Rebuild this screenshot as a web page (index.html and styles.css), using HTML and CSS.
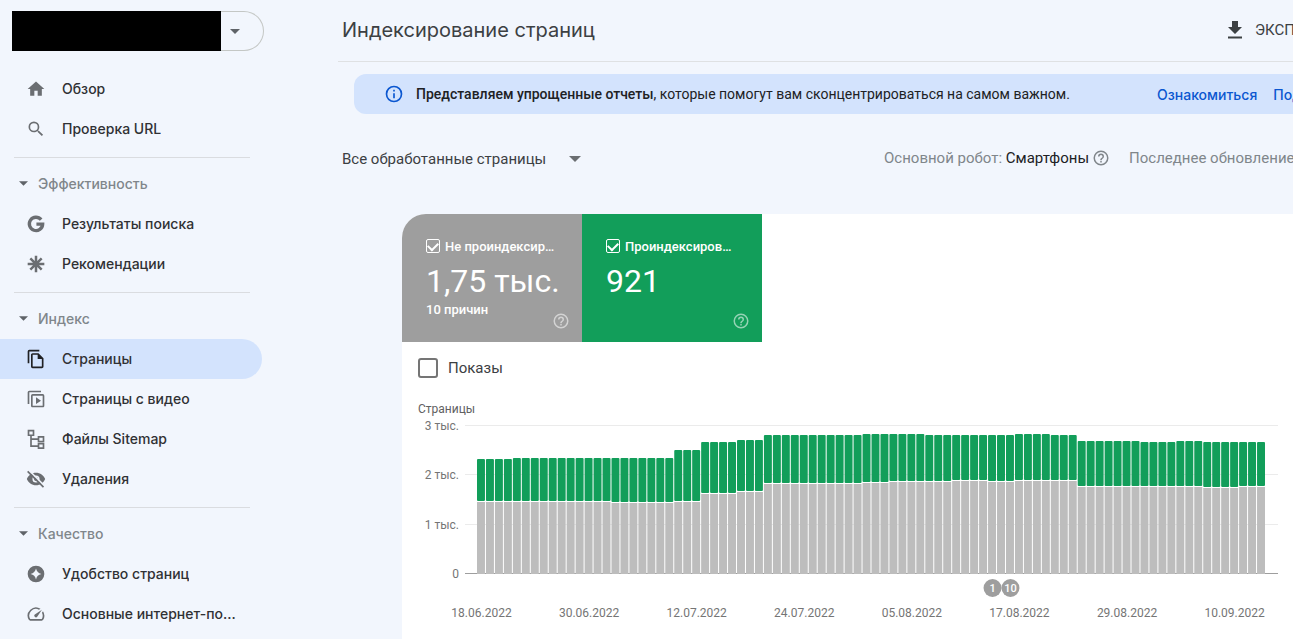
FILE: index.html
```html
<!DOCTYPE html>
<html lang="ru">
<head>
<meta charset="utf-8">
<title>Индексирование страниц</title>
<link rel="stylesheet" href="styles.css">
</head>
<body>
<aside class="sidebar">
  <div class="property">
    <span class="property-name"></span>
    <button class="property-toggle" type="button" aria-label="Выбрать ресурс"><svg class="caret" viewBox="0 0 10 5"><path d="M0 0h10L5 5z"/></svg></button>
  </div>
  <nav class="nav">
    <a class="nav-item" href="#"><svg class="icon" viewBox="0 0 24 24"><path d="M10 20v-6h4v6h5v-8h3L12 3 2 12h3v8z"/></svg><span>Обзор</span></a>
    <a class="nav-item" href="#"><svg class="icon" viewBox="0 0 24 24"><path d="M15.5 14h-.79l-.28-.27A6.47 6.47 0 0 0 16 9.5 6.5 6.5 0 1 0 9.5 16c1.61 0 3.09-.59 4.23-1.57l.27.28v.79l5 4.99L20.49 19zm-6 0a4.5 4.5 0 1 1 0-9 4.5 4.5 0 0 1 0 9z"/></svg><span>Проверка URL</span></a>
    <hr class="rule">
    <button class="nav-group" type="button"><svg class="caret caret-small" viewBox="0 0 10 5"><path d="M0 0h10L5 5z"/></svg>Эффективность</button>
    <a class="nav-item" href="#"><svg class="icon" viewBox="0 0 24 24"><path class="stroke-g" d="M18.2 6.8A8 8 0 1 0 20 12.100h-7.500"/></svg><span>Результаты поиска</span></a>
    <a class="nav-item" href="#"><svg class="icon" viewBox="0 0 24 24"><path class="stroke-star" d="M12 2v20M2 12h20M5.200 5.200l13.600 13.600M18.800 5.200 5.200 18.800"/></svg><span>Рекомендации</span></a>
    <hr class="rule">
    <button class="nav-group" type="button"><svg class="caret caret-small" viewBox="0 0 10 5"><path d="M0 0h10L5 5z"/></svg>Индекс</button>
    <a class="nav-item active" href="#" aria-current="page"><svg class="icon" viewBox="0 0 24 24"><path d="M16 1H4a2 2 0 0 0-2 2v14h2V3h12zm-1 4 6 6v10c0 1.100-.9 2-2 2H8c-1.100 0-2-.9-2-2V7c0-1.100.9-2 2-2zM8 7v14h11v-9h-5V7z"/></svg><span>Страницы</span></a>
    <a class="nav-item" href="#"><svg class="icon" viewBox="0 0 24 24"><path d="M18 2H4a2 2 0 0 0-2 2v14h2V4h14zM20 6H8a2 2 0 0 0-2 2v12c0 1.100.9 2 2 2h12c1.100 0 2-.9 2-2V8a2 2 0 0 0-2-2zm0 14H8V8h12zM12 10v8l6-4z"/></svg><span>Страницы с видео</span></a>
    <a class="nav-item" href="#"><svg class="icon" viewBox="0 0 24 24"><path class="stroke" d="M3 2h6v5.500H3zM15 9.500h6V15h-6zM15 17.500h6V23h-6zM6 7.500v13h9M6 12.200h9"/></svg><span>Файлы Sitemap</span></a>
    <a class="nav-item" href="#"><svg class="icon" viewBox="0 0 24 24"><path d="M12 4.500C7 4.500 2.730 7.610 1 12c1.730 4.390 6 7.500 11 7.500s9.270-3.110 11-7.500c-1.730-4.390-6-7.500-11-7.500zm0 3.200a4.300 4.300 0 1 1 0 8.600 4.300 4.300 0 0 1 0-8.600z" fill-rule="evenodd"/><circle cx="12" cy="12" r="2.300"/><path class="slash-gap" d="M3.500 1.500 22.500 20.500"/><path class="stroke" d="M2 2.800 21 21.800"/></svg><span>Удаления</span></a>
    <hr class="rule">
    <button class="nav-group" type="button"><svg class="caret caret-small" viewBox="0 0 10 5"><path d="M0 0h10L5 5z"/></svg>Качество</button>
    <a class="nav-item" href="#"><svg class="icon" viewBox="0 0 24 24"><path fill-rule="evenodd" d="M12 2a10 10 0 1 0 0 20 10 10 0 0 0 0-20zm0 3.500c.9 3.700 2.800 5.600 6.500 6.500-3.700.9-5.600 2.800-6.500 6.500-.9-3.700-2.800-5.600-6.500-6.500 3.700-.9 5.600-2.800 6.500-6.500z"/></svg><span>Удобство страниц</span></a>
    <a class="nav-item" href="#"><svg class="icon" viewBox="0 0 24 24"><path d="m20.380 8.570-1.230 1.850a8 8 0 0 1-.22 7.580H5.070A8 8 0 0 1 15.580 6.850l1.850-1.230A10 10 0 0 0 3.350 19a2 2 0 0 0 1.720 1h13.850a2 2 0 0 0 1.740-1 10 10 0 0 0-.27-10.440zm-9.790 6.840a2 2 0 0 0 2.830 0l5.660-8.490-8.490 5.660a2 2 0 0 0 0 2.830z"/></svg><span>Основные интернет-показатели</span></a>
  </nav>
</aside>
<main class="main">
  <header class="header">
    <h1 class="title">Индексирование страниц</h1>
    <button class="export" type="button"><svg class="export-icon" viewBox="0 0 24 24"><path d="M19 9h-4V3H9v6H5l7 7zM5 18.500v2h14v-2z"/></svg>ЭКСПОРТИРОВАТЬ</button>
  </header>
  <section class="banner">
    <svg class="info" viewBox="0 0 24 24"><path d="M11 7h2v2h-2zm0 4h2v6h-2zm1-9a10 10 0 1 0 0 20 10 10 0 0 0 0-20zm0 18a8 8 0 1 1 0-16 8 8 0 0 1 0 16z"/></svg>
    <p class="banner-text"><b>Представляем упрощенные отчеты</b>, которые помогут вам сконцентрироваться на самом важном.</p>
    <div class="banner-links">
      <a class="banner-link" href="#">Ознакомиться</a>
      <a class="banner-link" href="#">Подробнее</a>
    </div>
  </section>
  <div class="filters">
    <label class="filter"><select class="filter-select" aria-label="Фильтр страниц"><option>Все обработанные страницы</option></select><svg class="filter-caret" viewBox="0 0 12 6"><path d="M0 0h12L6 6z"/></svg></label>
    <div class="meta">
      <span>Основной робот: <span class="strong">Смартфоны</span></span>
      <svg class="help" viewBox="0 0 24 24"><use href="#help-shape"/></svg>
      <span class="updated">Последнее обновление: 16.09.2022</span>
    </div>
  </div>
  <section class="card">
    <div class="tiles">
      <div class="tile tile-grey">
        <label class="tile-label"><input class="tile-check" type="checkbox" checked><span>Не проиндексировано</span></label>
        <div class="tile-value">1,75 тыс.</div>
        <div class="tile-note">10 причин</div>
        <svg class="help tile-help" viewBox="0 0 24 24"><use href="#help-shape"/></svg>
      </div>
      <div class="tile tile-green">
        <label class="tile-label"><input class="tile-check" type="checkbox" checked><span>Проиндексировано</span></label>
        <div class="tile-value">921</div>
        <svg class="help tile-help" viewBox="0 0 24 24"><use href="#help-shape"/></svg>
      </div>
    </div>
    <label class="impressions"><input class="impressions-check" type="checkbox">Показы</label>
    <div class="chart-title">Страницы</div>
    <div class="chart"><svg class="chart-svg" id="chart" role="img" aria-label="Страницы по дням"></svg></div>
  </section>
</main>
<svg class="defs" aria-hidden="true"><defs><path id="help-shape" d="M11 18h2v-2h-2zm1-16a10 10 0 1 0 0 20 10 10 0 0 0 0-20zm0 18a8 8 0 1 1 0-16 8 8 0 0 1 0 16zm0-14a4 4 0 0 0-4 4h2a2 2 0 1 1 4 0c0 2-3 1.750-3 5h2c0-2.250 3-2.500 3-5a4 4 0 0 0-4-4z"/></defs></svg>
<script src="chart.js"></script>
</body>
</html>
```
FILE: styles.css
```css
* { box-sizing: border-box; }
body {
  margin: 0;
  min-height: 100vh;
  display: flex;
  background: #f2f6fd;
  color: #202124;
  font-family: Roboto, "Liberation Sans", sans-serif;
  font-size: 15px;
  overflow-x: hidden;
}
button { border: 0; padding: 0; background: none; font: inherit; cursor: pointer; }
a { text-decoration: none; }
.defs { position: absolute; width: 0; height: 0; }

.sidebar { flex: none; width: 264px; padding-top: 11px; font-family: Inter, "Open Sans", sans-serif; }
.property { display: flex; height: 40px; margin-left: 12px; }
.property-name { flex: 1; background: #000; }
.property-toggle {
  width: 43px;
  padding-left: 9px;
  border: 1px solid #c4c7c5;
  border-left: 0;
  border-radius: 0 20px 20px 0;
  display: flex;
  align-items: center;
}
.caret { width: 10px; height: 5px; fill: #5f6368; }
.caret-small { width: 9px; }
.nav { padding-top: 18px; }
.nav-item {
  display: flex;
  align-items: center;
  gap: 16px;
  height: 40px;
  margin-right: 2px;
  padding: 0 24px 0 26px;
  border-radius: 0 20px 20px 0;
  color: #303134;
  font-size: 14px;
  font-weight: 500;
}
.nav-item span { overflow: hidden; text-overflow: ellipsis; white-space: nowrap; padding-bottom: 1px; }
.active { background: #d3e3fd; }
.icon { flex: none; width: 20px; height: 20px; fill: #6b6e72; }
.active .icon { fill: #202124; }
.stroke, .stroke-g, .stroke-star { fill: none; stroke: #6b6e72; stroke-width: 2; }
.stroke-g { stroke-width: 4; }
.stroke-star { stroke-width: 3; }
.slash-gap { fill: none; stroke: #f2f6fd; stroke-width: 2; }
.rule { height: 1px; margin: 8px 14px 6px; border: 0; background: #dadce0; }
.nav-group {
  display: flex;
  align-items: center;
  gap: 10px;
  width: 100%;
  height: 40px;
  padding: 0 0 2px 19px;
  color: #80868b;
  font-size: 14px;
  font-weight: 500;
}

.main { flex: 1; min-width: 0; margin-left: 74px; display: flex; flex-direction: column; overflow: hidden; white-space: nowrap; }
.header {
  display: flex;
  justify-content: space-between;
  align-items: center;
  height: 62px;
  padding: 0 0 2px 4px;
  border-bottom: 1px solid #dfe1e3;
}
.title { margin: 0; font: 400 20px Inter, "Open Sans", sans-serif; color: #3c4043; }
.export { flex: none; width: 70px; display: flex; align-items: center; gap: 8px; color: #3c4043; }
.export-icon { flex: none; width: 24px; height: 24px; fill: #3c4043; }
.banner {
  display: flex;
  align-items: center;
  height: 40px;
  margin: 12px 0 0 16px;
  padding-left: 30px;
  border-radius: 12px 0 0 12px;
  background: #d3e3fd;
}
.info { flex: none; width: 20px; height: 20px; fill: #0b57d0; }
.banner-text { flex: 1; margin: 0 0 0 12px; font-size: 14px; }
.banner-text b { font-weight: 500; }
.banner-links { flex: none; width: 136px; display: flex; gap: 16px; }
.banner-link { color: #0b57d0; font: 500 14px Inter, "Open Sans", sans-serif; }
.filters { display: flex; justify-content: space-between; align-items: center; height: 100px; padding: 0 0 10px 4px; }
.filter { display: flex; align-items: center; gap: 22px; }
.filter-select { appearance: none; border: 0; padding: 0; background: none; color: #3c4043; font: inherit; }
.filter-caret { width: 12px; height: 6px; fill: #6b6e72; }
.meta { flex: none; width: 409px; display: flex; align-items: center; padding-bottom: 2px; color: #80868b; }
.strong { color: #202124; }
.help { flex: none; width: 18px; height: 18px; margin-left: 3px; fill: #80868b; }
.updated { margin-left: 19px; }

.card { flex: 1; margin-left: 64px; border-top-left-radius: 24px; background: #fff; overflow: hidden; }
.tiles { display: flex; }
.tile { position: relative; width: 180px; height: 128px; padding: 24px 24px 0; color: #fff; }
.tile-grey { background: #9e9e9e; }
.tile-green { background: #129e5a; }
.tile-label { display: flex; align-items: center; gap: 5px; height: 16px; font-size: 13px; font-weight: 500; }
.tile-label span { overflow: hidden; text-overflow: ellipsis; }
.tile-check {
  appearance: none;
  flex: none;
  width: 14px;
  height: 14px;
  margin: 0;
  border: 1px solid #fff;
  border-radius: 2px;
  display: grid;
  place-items: center;
}
.tile-check:checked::after {
  content: "";
  width: 8px;
  height: 5px;
  margin-bottom: 2px;
  border: solid #fff;
  border-width: 0 0 2px 2px;
  transform: rotate(-45deg);
}
.tile-value { margin-top: 8px; font-size: 32px; line-height: 38px; }
.tile-note { margin-top: 2px; font-size: 13px; line-height: 16px; font-weight: 500; }
.tile-help { position: absolute; right: 12px; bottom: 12px; fill: #fff; opacity: .55; }
.impressions { display: flex; align-items: center; gap: 10px; width: max-content; margin: 16px 0 0 16px; height: 20px; color: #3c4043; }
.impressions-check { appearance: none; width: 20px; height: 20px; margin: 0; border: 2px solid #757575; border-radius: 3px; }
.chart-title { margin: 24px 0 0 16px; font-size: 12px; line-height: 14px; color: #616161; }
.chart { padding: 9px 27px 0 75px; }
.chart-svg { display: block; width: 100%; height: 200px; overflow: visible; }
.grid { width: calc(100% + 24px); height: 1px; fill: #ebebeb; }
.axis { fill: #9e9e9e; }
.bar { width: calc(100% / 88 - 1px); }
.bar-grey { fill: #bdbdbd; }
.bar-green { fill: #129e5a; }
.tick { font-size: 12px; fill: #757575; }
.tick-y { text-anchor: end; }
.tick-x { text-anchor: middle; }
.mark { fill: #9e9e9e; }
.mark-text { fill: #fff; font-size: 11px; font-weight: 500; text-anchor: middle; }
```
FILE: chart.js
```js
// Each run: [number of days, top of the indexed part, top of the not indexed part], in plot pixels.
const runs = [
  [4, 34, 77], [11, 33, 77], [7, 33, 78], [3, 25, 77], [4, 17, 69], [3, 15, 67],
  [11, 10, 59], [3, 9, 58], [4, 9, 57], [3, 10, 57], [4, 10, 56], [3, 10, 57],
  [4, 9, 56], [3, 10, 56], [7, 16, 62], [4, 17, 62], [3, 16, 62], [4, 17, 63], [3, 17, 62]
];
const base = 149;
const svg = document.getElementById("chart");

function add(tag, attrs, text) {
  const node = document.createElementNS("http://www.w3.org/2000/svg", tag);
  for (const key in attrs) node.setAttribute(key, attrs[key]);
  if (text) node.textContent = text;
  svg.appendChild(node);
}

const total = runs.reduce((sum, run) => sum + run[0], 0);
const percent = (day) => (day * 100) / total + "%";

[["3 тыс.", 0], ["2 тыс.", 49], ["1 тыс.", 99], ["0", 148]].forEach(([label, y]) => {
  add("rect", { class: y === 148 ? "grid axis" : "grid", x: -12, y });
  add("text", { class: "tick tick-y", x: -18, y: y + 5 }, label);
});

let day = 0;
runs.forEach(([count, top, split]) => {
  for (let i = 0; i < count; i++, day++) {
    add("rect", { class: "bar bar-green", x: percent(day), y: top, height: split - top - 1, rx: 1 });
    add("rect", { class: "bar bar-grey", x: percent(day), y: split, height: base - split });
  }
});

["18.06.2022", "30.06.2022", "12.07.2022", "24.07.2022", "05.08.2022", "17.08.2022", "29.08.2022", "10.09.2022"]
  .forEach((label, i) => add("text", { class: "tick tick-x", x: percent(i * 12 + 0.5), y: 192 }, label));

[["1", 57.5], ["10", 59.5]].forEach(([label, at]) => {
  add("circle", { class: "mark", cx: percent(at), cy: 163, r: 9 });
  add("text", { class: "mark-text", x: percent(at), y: 167 }, label);
});
```
